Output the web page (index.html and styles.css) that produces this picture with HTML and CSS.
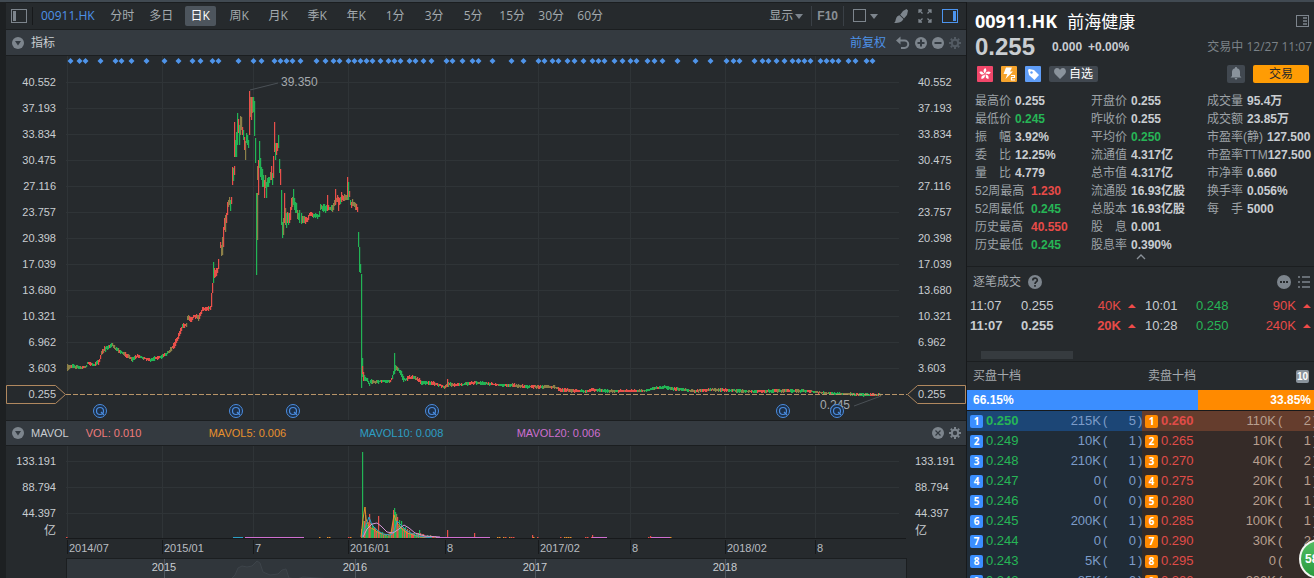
FILE: index.html
```
<!DOCTYPE html>
<html lang="zh-CN">
<head>
<meta charset="utf-8">
<title>00911.HK 前海健康</title>
<link rel="stylesheet" href="styles.css">
</head>
<body>
<div class="app">
  <main class="main">
    <nav class="toolbar">
      <button class="icon-btn side-toggle" aria-label="侧栏"><svg width="16" height="14" viewBox="0 0 16 14"><rect x=".5" y=".5" width="15" height="13" fill="none" stroke="#7d858d"/><rect x="2" y="2" width="3" height="10" fill="#7d858d"/></svg></button>
      <span class="sep"></span>
      <button class="symbol">00911.HK</button>
      <div class="periods">
        <button>分时</button><button>多日</button><button class="active">日K</button><button>周K</button><button>月K</button><button>季K</button><button>年K</button><button>1分</button><button>3分</button><button>5分</button><button>15分</button><button>30分</button><button>60分</button>
      </div>
      <div class="tools">
        <button class="display">显示<svg width="8" height="5" viewBox="0 0 8 5"><path d="M0 0h8L4 5z" fill="#7d858d"/></svg></button>
        <button class="f10">F10</button>
        <button class="shape" aria-label="形状"><svg width="26" height="14" viewBox="0 0 26 14"><rect x=".5" y=".5" width="12" height="12" fill="none" stroke="#7d858d"/><path d="M17 5h8l-4 5z" fill="#7d858d"/></svg></button>
        <button class="icon-btn" aria-label="画笔"><svg width="14" height="14" viewBox="0 0 14 14" fill="#7d858d"><path d="M9 2l3.500-2L14 1.500 13 6l-3 3.500L6.200 5.700z"/><path d="M5.500 6.300L9.400 10C8 12.800 6 13.800 0 14c1.500-1 1.300-2 1.800-3.800.6-2.200 1.800-3.400 3.700-3.900z"/></svg></button>
        <button class="icon-btn" aria-label="全屏"><svg width="14" height="14" viewBox="0 0 14 14" fill="none" stroke="#7d858d"><path d="M1 4V1h3M1 1l3.500 3.500M10 1h3v3M13 1L9.500 4.500M1 10v3h3M1 13l3.500-3.500M10 13h3v-3M13 13L9.500 9.500" stroke-width="1.300"/></svg></button>
        <button class="icon-btn" aria-label="报价面板"><svg width="16" height="14" viewBox="0 0 16 14"><rect x=".5" y=".5" width="15" height="13" fill="none" stroke="#4c94ee"/><rect x="11" y="2" width="3" height="10" fill="#4c94ee"/></svg></button>
      </div>
    </nav>

    <header class="bar">
      <svg class="disc" width="12" height="12" viewBox="0 0 12 12"><circle cx="6" cy="6" r="6" fill="#7d858d"/><path d="M3 4h6L6 8.500z" fill="#333a41"/></svg>
      <h2 class="bar-title">指标</h2>
      <div class="bar-actions">
        <button class="adjust">前复权</button>
        <button class="icon-btn" aria-label="撤销"><svg width="14" height="14" viewBox="0 0 14 14"><path d="M2 4.500h6.500a3.500 3.500 0 0 1 0 7.500H5" fill="none" stroke="#7d858d" stroke-width="2"/><path d="M0 4.500L4.500.5v8z" fill="#7d858d"/></svg></button>
        <button class="icon-btn" aria-label="放大"><svg width="12" height="12" viewBox="0 0 12 12"><circle cx="6" cy="6" r="6" fill="#7d858d"/><path d="M6 2.500v7M2.500 6h7" stroke="#333a41" stroke-width="2"/></svg></button>
        <button class="icon-btn" aria-label="缩小"><svg width="12" height="12" viewBox="0 0 12 12"><circle cx="6" cy="6" r="6" fill="#7d858d"/><path d="M2.500 6h7" stroke="#333a41" stroke-width="2"/></svg></button>
        <button class="icon-btn" aria-label="设置"><svg width="12" height="12" viewBox="0 0 12 12" fill="none" stroke="#535b63"><circle cx="6" cy="6" r="3.200" stroke-width="2"/><path d="M6 0v2M6 10v2M0 6h2M10 6h2M1.800 1.800l1.400 1.400M8.800 8.800l1.400 1.400M1.800 10.200l1.400-1.400M8.800 3.200l1.400-1.400" stroke-width="2"/></svg></button>
      </div>
    </header>

    <section class="chart-row price-row">
      <ul class="axis left">
        <li>40.552</li><li>37.193</li><li>33.834</li><li>30.475</li><li>27.116</li><li>23.757</li><li>20.398</li><li>17.039</li><li>13.680</li><li>10.321</li><li>6.962</li><li>3.603</li>
        <li class="tag"><svg width="60" height="19" viewBox="0 0 60 19"><path d="M.5.5h49l10 9-10 9H.5z" fill="#262a2d" stroke="#b0885f"/></svg><span>0.255</span></li>
      </ul>
      <div class="plot" id="price-plot"></div>
      <ul class="axis right">
        <li>40.552</li><li>37.193</li><li>33.834</li><li>30.475</li><li>27.116</li><li>23.757</li><li>20.398</li><li>17.039</li><li>13.680</li><li>10.321</li><li>6.962</li><li>3.603</li>
        <li class="tag"><svg width="59" height="19" viewBox="0 0 59 19"><path d="M58.500.5h-48l-10 9 10 9h48z" fill="#262a2d" stroke="#b0885f"/></svg><span>0.255</span></li>
      </ul>
    </section>

    <header class="bar vol-bar">
      <svg class="disc" width="12" height="12" viewBox="0 0 12 12"><circle cx="6" cy="6" r="6" fill="#7d858d"/><path d="M3 4h6L6 8.500z" fill="#333a41"/></svg>
      <h2 class="bar-title small">MAVOL</h2>
      <span class="ma vol">VOL: 0.010</span>
      <span class="ma ma5">MAVOL5: 0.006</span>
      <span class="ma ma10">MAVOL10: 0.008</span>
      <span class="ma ma20">MAVOL20: 0.006</span>
      <div class="bar-actions">
        <button class="icon-btn" aria-label="关闭"><svg width="12" height="12" viewBox="0 0 12 12"><circle cx="6" cy="6" r="6" fill="#7d858d"/><path d="M3.500 3.500l5 5M8.500 3.500l-5 5" stroke="#333a41" stroke-width="1.200"/></svg></button>
        <button class="icon-btn" aria-label="设置"><svg width="12" height="12" viewBox="0 0 12 12" fill="none" stroke="#7d858d"><circle cx="6" cy="6" r="3.200" stroke-width="2"/><path d="M6 0v2M6 10v2M0 6h2M10 6h2M1.800 1.800l1.400 1.400M8.800 8.800l1.400 1.400M1.800 10.200l1.400-1.400M8.800 3.200l1.400-1.400" stroke-width="2"/></svg></button>
      </div>
    </header>

    <section class="chart-row vol-row">
      <ul class="axis left vol-axis"><li>133.191</li><li>88.794</li><li>44.397</li><li class="unit">亿</li></ul>
      <div class="plot" id="vol-plot"></div>
      <ul class="axis right vol-axis"><li>133.191</li><li>88.794</li><li>44.397</li><li class="unit">亿</li></ul>
    </section>
    <section class="chart-row date-row"><div class="plot" id="date-axis"></div></section>
    <section class="chart-row nav-row"><div class="plot navigator" id="navigator"></div></section>
  </main>

  <aside class="panel">
    <div class="title-row">
      <h1>00911.HK</h1><span class="name">前海健康</span>
      <button class="icon-btn push" aria-label="布局"><svg width="13" height="12" viewBox="0 0 13 12"><rect x=".5" y=".5" width="12" height="11" fill="none" stroke="#7d858d"/><path d="M7 3h4M7 6h4M7 9h4" stroke="#7d858d" stroke-width="1.500"/></svg></button>
    </div>
    <div class="price-line">
      <strong class="last">0.255</strong><span class="change">0.000</span><span class="change pct">+0.00%</span>
      <time class="status">交易中 12/27 11:07</time>
    </div>
    <div class="badges">
      <svg width="16" height="16" viewBox="0 0 16 16"><rect width="16" height="16" rx="1" fill="#f2476a"/><g fill="#fff"><path id="petal" d="M8 7.500C6 6 6 3.500 8.200 2c1.300 1.500 1.500 2.800.4 3.700z"/><use href="#petal" transform="rotate(72 8 8)"/><use href="#petal" transform="rotate(144 8 8)"/><use href="#petal" transform="rotate(216 8 8)"/><use href="#petal" transform="rotate(288 8 8)"/></g></svg>
      <svg width="16" height="16" viewBox="0 0 16 16"><rect width="16" height="16" rx="1" fill="#f5a32c"/><path d="M5 1.500h6L9 5.500h3L4.500 13l1.800-5H2.500z" fill="#fff"/><path d="M10 9.500h3.500v2H10.500v2.500h3.500" fill="none" stroke="#fff" stroke-width="1.200"/></svg>
      <svg width="16" height="16" viewBox="0 0 16 16"><rect width="16" height="16" rx="1" fill="#5f9df7"/><path d="M3 4l1-1 5 1 5 5-4.500 5L4 9z" fill="#fff"/><circle cx="6.500" cy="6.500" r="1.200" fill="#5f9df7"/></svg>
      <button class="fav"><svg width="12" height="11" viewBox="0 0 12 11"><path d="M6 11L1 6C-1 3.500.5 0 3 0c1.500 0 2.500.8 3 2 .5-1.200 1.500-2 3-2 2.500 0 4 3.500 2 6z" fill="#8a939c"/></svg>自选</button>
      <button class="bell" aria-label="提醒"><svg width="12" height="13" viewBox="0 0 12 13"><path d="M6 0c.8 0 1 .5 1 1.200C9 1.700 10 3 10 5v4l1.500 1.500H.5L2 9V5c0-2 1-3.300 3-3.800C5 .5 5.200 0 6 0zM4.500 11h3L6 13z" fill="#8a939c"/></svg></button>
      <button class="trade">交易</button>
    </div>

    <div class="stats">
      <dl>
        <div><dt>最高价</dt><dd>0.255</dd></div>
        <div><dt>最低价</dt><dd class="dn">0.245</dd></div>
        <div><dt>振　幅</dt><dd>3.92%</dd></div>
        <div><dt>委　比</dt><dd>12.25%</dd></div>
        <div><dt>量　比</dt><dd>4.779</dd></div>
        <div><dt class="wide">52周最高</dt><dd class="up">1.230</dd></div>
        <div><dt class="wide">52周最低</dt><dd class="dn">0.245</dd></div>
        <div><dt class="wide">历史最高</dt><dd class="up">40.550</dd></div>
        <div><dt class="wide">历史最低</dt><dd class="dn">0.245</dd></div>
      </dl>
      <dl>
        <div><dt>开盘价</dt><dd>0.255</dd></div>
        <div><dt>昨收价</dt><dd>0.255</dd></div>
        <div><dt>平均价</dt><dd class="dn">0.250</dd></div>
        <div><dt>流通值</dt><dd>4.317亿</dd></div>
        <div><dt>总市值</dt><dd>4.317亿</dd></div>
        <div><dt>流通股</dt><dd>16.93亿股</dd></div>
        <div><dt>总股本</dt><dd>16.93亿股</dd></div>
        <div><dt>股　息</dt><dd>0.001</dd></div>
        <div><dt>股息率</dt><dd>0.390%</dd></div>
      </dl>
      <dl>
        <div><dt>成交量</dt><dd>95.4万</dd></div>
        <div><dt>成交额</dt><dd>23.85万</dd></div>
        <div><dt>市盈率(静)</dt><dd>127.500</dd></div>
        <div><dt class="tight">市盈率TTM</dt><dd>127.500</dd></div>
        <div><dt>市净率</dt><dd>0.660</dd></div>
        <div><dt>换手率</dt><dd>0.056%</dd></div>
        <div><dt>每　手</dt><dd>5000</dd></div>
      </dl>
    </div>
    <button class="collapse" aria-label="收起"><svg width="10" height="6" viewBox="0 0 10 6"><path d="M1 5l4-4 4 4" fill="none" stroke="#8a9199" stroke-width="1.300"/></svg></button>

    <section class="ticks">
      <header class="sub-head">
        <h2>逐笔成交</h2>
        <svg width="14" height="14" viewBox="0 0 14 14"><circle cx="7" cy="7" r="7" fill="#7d858d"/><path d="M4.800 5.500c0-3 4.500-3 4.500-.3C9.300 7 7 6.800 7 9M7 10v1.700" fill="none" stroke="#262a2d" stroke-width="1.700"/></svg>
        <button class="icon-btn push" aria-label="更多"><svg width="14" height="14" viewBox="0 0 14 14"><circle cx="7" cy="7" r="7" fill="#7d858d"/><path d="M3 7h2M6 7h2M9 7h2" stroke="#262a2d" stroke-width="2"/></svg></button>
        <button class="icon-btn list" aria-label="列表"><svg width="12" height="12" viewBox="0 0 12 12"><path d="M0 1h2M4 1h8M0 6h2M4 6h8M0 11h2M4 11h8" stroke="#7d858d" stroke-width="1.500"/></svg></button>
      </header>
      <div class="pair">
        <table>
          <tr><td class="t">11:07</td><td class="p">0.255</td><td class="q up">40K</td><td class="a"><i class="tri"></i></td></tr>
          <tr class="bold"><td class="t">11:07</td><td class="p">0.255</td><td class="q up">20K</td><td class="a"><i class="tri"></i></td></tr>
        </table>
        <table>
          <tr><td class="t">10:01</td><td class="p dn">0.248</td><td class="q up">90K</td><td class="a"><i class="tri"></i></td></tr>
          <tr><td class="t">10:28</td><td class="p dn">0.250</td><td class="q up">240K</td><td class="a"><i class="tri"></i></td></tr>
        </table>
      </div>
      <div class="thumb"></div>
    </section>

    <section class="book">
      <header class="sub-head book-head"><h2>买盘十档</h2><h2>卖盘十档</h2><button class="depth push">10</button></header>
      <div class="ratio"><span class="bid">66.15%</span><span class="ask">33.85%</span></div>
      <div class="pair depth-rows">
        <table class="buy">
          <tr><td class="n"><b>1</b></td><td class="px">0.250</td><td class="qty">215K</td><td class="par">(</td><td class="cnt">5</td><td class="par">)</td></tr>
          <tr><td class="n"><b>2</b></td><td class="px">0.249</td><td class="qty">10K</td><td class="par">(</td><td class="cnt">1</td><td class="par">)</td></tr>
          <tr><td class="n"><b>3</b></td><td class="px">0.248</td><td class="qty">210K</td><td class="par">(</td><td class="cnt">1</td><td class="par">)</td></tr>
          <tr><td class="n"><b>4</b></td><td class="px">0.247</td><td class="qty">0</td><td class="par">(</td><td class="cnt">0</td><td class="par">)</td></tr>
          <tr><td class="n"><b>5</b></td><td class="px">0.246</td><td class="qty">0</td><td class="par">(</td><td class="cnt">0</td><td class="par">)</td></tr>
          <tr><td class="n"><b>6</b></td><td class="px">0.245</td><td class="qty">200K</td><td class="par">(</td><td class="cnt">1</td><td class="par">)</td></tr>
          <tr><td class="n"><b>7</b></td><td class="px">0.244</td><td class="qty">0</td><td class="par">(</td><td class="cnt">0</td><td class="par">)</td></tr>
          <tr><td class="n"><b>8</b></td><td class="px">0.243</td><td class="qty">5K</td><td class="par">(</td><td class="cnt">1</td><td class="par">)</td></tr>
          <tr><td class="n"><b>9</b></td><td class="px">0.242</td><td class="qty">85K</td><td class="par">(</td><td class="cnt">6</td><td class="par">)</td></tr>
        </table>
        <table class="sell">
          <tr><td class="n"><b>1</b></td><td class="px">0.260</td><td class="qty">110K</td><td class="par">(</td><td class="cnt">2</td><td class="par">)</td></tr>
          <tr><td class="n"><b>2</b></td><td class="px">0.265</td><td class="qty">10K</td><td class="par">(</td><td class="cnt">1</td><td class="par">)</td></tr>
          <tr><td class="n"><b>3</b></td><td class="px">0.270</td><td class="qty">40K</td><td class="par">(</td><td class="cnt">2</td><td class="par">)</td></tr>
          <tr><td class="n"><b>4</b></td><td class="px">0.275</td><td class="qty">20K</td><td class="par">(</td><td class="cnt">1</td><td class="par">)</td></tr>
          <tr><td class="n"><b>5</b></td><td class="px">0.280</td><td class="qty">20K</td><td class="par">(</td><td class="cnt">1</td><td class="par">)</td></tr>
          <tr><td class="n"><b>6</b></td><td class="px">0.285</td><td class="qty">100K</td><td class="par">(</td><td class="cnt">1</td><td class="par">)</td></tr>
          <tr><td class="n"><b>7</b></td><td class="px">0.290</td><td class="qty">30K</td><td class="par">(</td><td class="cnt">2</td><td class="par">)</td></tr>
          <tr><td class="n"><b>8</b></td><td class="px">0.295</td><td class="qty">0</td><td class="par">(</td><td class="cnt"></td><td class="par"></td></tr>
          <tr><td class="n"><b>9</b></td><td class="px">0.300</td><td class="qty">200K</td><td class="par">(</td><td class="cnt"></td><td class="par"></td></tr>
        </table>
      </div>
    </section>
  </aside>
  <div class="bubble">58</div>
</div>
<script src="chart.js"></script>
</body>
</html>
```
FILE: styles.css
```
* { box-sizing: border-box; }
body {
  margin: 0;
  background: #1d2022;
  color: #c9cdd1;
  font: 12px/18px "Liberation Sans", "Noto Sans CJK SC", sans-serif;
}
h1, h2, ul, dl, dd { margin: 0; padding: 0; font-size: inherit; font-weight: normal; }
ul { list-style: none; }
button { background: none; border: 0; padding: 0; color: inherit; font: inherit; cursor: pointer; }
svg { display: block; }
.up { color: #e84b48; }
.dn { color: #26b556; }
.push { margin-left: auto; }
.icon-btn { display: flex; align-items: center; }

.app {
  position: relative;
  display: grid;
  grid-template-columns: minmax(0, 1fr) 348px;
  height: 100vh;
  overflow: hidden;
  border-top: 2px solid #414a52;
}
.main { display: flex; flex-direction: column; min-width: 0; margin-left: 6px; background: #262a2d; }

.toolbar {
  display: flex;
  align-items: center;
  height: 28px;
  padding: 0 8px 0 5px;
  border-top: 1px solid #1b1e20;
  border-bottom: 1px solid #1b1e20;
  color: #a4aaaf;
  font-family: "Open Sans", "Noto Sans CJK SC", sans-serif;
}
.sep { width: 1px; height: 18px; margin: 0 8px 0 5px; background: #17191b; }
.symbol { color: #4d92e8; }
.periods { display: flex; margin-left: 12px; gap: 8px; }
.periods button { width: 31px; height: 20px; border-radius: 2px; white-space: nowrap; }
.periods .active { background: #4d555d; color: #fff; }
.tools { display: flex; align-items: center; margin-left: auto; gap: 10px; }
.display { display: flex; align-items: center; gap: 2px; margin-right: -2px; }
.f10 { height: 20px; padding: 0 5px; margin-right: -1px; border: solid #3a4046; border-width: 0 1px; color: #8a9096; font: bold 12px/20px "Liberation Sans", sans-serif; }
.shape { margin-right: 5px; }

.bar {
  display: flex;
  align-items: center;
  height: 26px;
  padding: 0 5px 0 6px;
  background: #343a40;
  border-bottom: 1px solid #1b1e20;
}
.bar-title { margin-left: 7px; }
.small, .ma { font-size: 11px; }
.bar-actions { display: flex; align-items: center; gap: 5px; margin-left: auto; }
.adjust { margin-right: 5px; color: #4d92e8; }
.vol-bar { border-top: 1px solid #1b1e20; }
.ma { width: 157px; white-space: nowrap; }
.ma5 { color: #e8912d; width: 151px; }
.ma10 { color: #2d9fc4; }
.ma20 { color: #cf6fd0; }
.vol { color: #ef7c7c; width: 123px; margin-left: 17px; }

.chart-row { display: grid; grid-template-columns: 60px minmax(0, 1fr) 59px; }
.plot { grid-column: 2; min-width: 0; overflow: hidden; }
.plot svg { width: 100%; height: 100%; }
.price-row { height: 364px; }
.vol-row { height: 93px; }
.date-row { height: 19px; }
.nav-row { flex: 1; min-height: 20px; }
.navigator { background: #30363b; border: solid #1b1e20; border-width: 1px 1px 0; }
.axis { padding-top: 13px; font-size: 11px; line-height: 26px; }
.axis.left { text-align: right; padding-right: 10px; }
.axis.right { padding-left: 11px; }
.axis.vol-axis { padding-top: 2px; }
.right.vol-axis { padding-left: 8px; }
.unit { font-size: 12px; line-height: 10px; }
.tag { position: relative; }
.tag svg { position: absolute; top: 4px; }
.left .tag svg { left: 0; }
.right .tag svg { left: -11px; }
.tag span { position: relative; }

.panel { border-left: 1px solid #17191b; background: #262a2d; overflow: hidden; display: flex; flex-direction: column; }
.title-row { display: flex; align-items: center; height: 32px; padding: 6px 5px 0 8px; color: #fff; }
h1 { font: bold 18px/24px "Open Sans", sans-serif; }
.name { margin-left: 10px; font: 17px/24px "Noto Sans CJK SC", sans-serif; }
.price-line { display: flex; align-items: center; height: 26px; padding: 0 2px 0 8px; white-space: nowrap; }
.last { font-size: 24px; line-height: 24px; }
.change { margin-left: 17px; font-weight: bold; }
.pct { margin-left: 6px; }
.status { margin-left: auto; color: #7b8288; font-family: "Open Sans", "Noto Sans CJK SC", sans-serif; }
.badges { display: flex; align-items: center; gap: 8px; height: 27px; padding: 0 5px 0 10px; }
.fav { display: flex; align-items: center; gap: 3px; height: 16px; padding: 0 5px; background: #414850; border-radius: 2px; color: #fff; }
.bell { display: grid; place-items: center; width: 18px; height: 18px; margin-left: auto; background: #414850; border-radius: 2px; }
.trade { width: 56px; height: 18px; border-radius: 2px; background: #ff9c04; color: #2a2a2a; }

.stats { display: grid; grid-template-columns: 116px 116px 1fr; padding: 5px 0 0 8px; }
.stats dl > div { display: flex; height: 18px; white-space: nowrap; }
dt { min-width: 36px; margin-right: 4px; color: #9da2a7; }
dt.wide { min-width: 52px; }
dt.tight { margin-right: 0; }
dd { font-weight: bold; }
.collapse { align-self: center; height: 12px; display: flex; align-items: flex-start; }

.ticks { height: 95px; border-top: 1px solid #1b1e20; }
.sub-head { display: flex; align-items: center; height: 29px; padding-left: 6px; gap: 7px; color: #a4a9ae; }
.list { padding-right: 4px; }
.pair { display: grid; grid-template-columns: 175px 175px; }
table { border-collapse: collapse; table-layout: fixed; width: 175px; font-size: 13px; line-height: 20px; }
td { padding: 0; height: 20px; }
.t { width: 51px; padding-left: 3px; }
.p { width: 50px; padding-left: 3px; }
.q { width: 53px; text-align: right; }
.a { padding-left: 7px; }
.bold { font-weight: bold; }
.tri { display: block; width: 8px; border: solid transparent; border-width: 0 4px 4px; border-bottom-color: #f04a48; }
.thumb { width: 92px; height: 8px; margin: 15px 0 0 14px; background: #363b3f; }

.book { border-top: 1px solid #1b1e20; }
.book-head { height: 28px; gap: 0; padding-right: 5px; }
.book-head h2 { width: 175px; }
.book-head h2 + h2 { width: auto; }
.depth { width: 13px; height: 13px; border-radius: 2px; background: #8a939c; color: #fff; font: bold 10px/13px "Liberation Sans", sans-serif; }
.ratio { display: flex; height: 21px; border-bottom: 1px solid #17191b; font-weight: bold; line-height: 20px; color: #fff; }
.bid { flex: 2 1 0; padding-left: 6px; background: #3b8eff; }
.ask { flex: 1 1 0; padding-right: 3px; text-align: right; background: #ff8a00; }
.buy { background: #202c37; color: #7d9cc9; }
.sell { background: #352b28; color: #b89f8f; }
.buy tr:first-child { background: #1c4676; }
.sell tr:first-child { background: #653d2d; }
.n { width: 19px; padding-left: 3px; }
.n b { display: block; width: 13px; height: 13px; border-radius: 2px; background: #3b8eff; color: #fff; text-align: center; font: bold 10px/13px "Open Sans", sans-serif; }
.sell b { background: #ff8a00; }
.px { width: 50px; color: #26b556; }
.sell .px { color: #e04c48; }
tr:first-child .px { font-weight: bold; }
.qty { width: 65px; text-align: right; }
.par { width: 6px; padding-left: 2px; }
.cnt { width: 29px; text-align: right; }

.bubble {
  position: absolute;
  right: -25px;
  bottom: -1px;
  width: 40px;
  height: 40px;
  border: 2px solid #f2f5f2;
  border-radius: 50%;
  background: linear-gradient(#52bd63, #279a3d);
  color: #fff;
  font: bold 12px/36px "Liberation Sans", sans-serif;
  padding-left: 4px;
}
```
FILE: chart.js
```
(function () {
  var BASE = 841;
  var RED = '#e8504a', GREEN = '#22b455', OLIVE = '#8c8048', GRID = '#2f3437';
  var COLORS = { r: RED, g: GREEN, o: OLIVE };
  var seed = 7;
  function rnd() { seed = (seed * 16807) % 2147483647; return seed / 2147483647; }

  var grid = [1, 96, 187, 282, 379, 472, 564, 659, 749];
  var dates = ['2014/07', '2015/01', '7', '2016/01', '8', '2017/02', '8', '2018/02', '8'];
  var events = [4,13,19,34,49,55,65,80,98,112,126,134,146,152,172,187,195,208,214,220,226,234,250,259,267,273,282,288,294,300,306,314,322,328,334,343,349,357,365,380,386,396,406,412,426,445,457,472,478,486,492,501,508,517,526,532,538,548,556,564,570,581,588,596,611,629,644,660,667,673,688,696,702,710,718,726,732,738,744,754,760,766,772,782,789,800,806];
  var quarters = [34, 170, 227, 366, 717, 771];

  /* Ranges are stored in thirds of a unit: x, high, low */
  var early = [[20,850,875],[35,850,868],[60,858,868],[75,855,866],[80,845,855],[100,850,860],[110,840,858],[118,830,848],[122,808,830],[135,795,815],[155,785,800],[165,800,815],[185,812,825],[205,822,840],[215,832,845],[230,822,835],[250,828,840],[270,835,846],[290,826,840],[310,820,834],[325,808,820],[340,785,805],[350,765,785],[358,740,775],[365,730,745],[378,728,742],[380,703,720],[390,712,732],[400,700,715],[415,700,725],[425,680,695],[438,678,695],[451,675,688]];
  var middle = [[725,402,432],[742,410,432],[745,394,412],[765,398,415],[775,398,418],[779,368,395],[790,372,400],[800,372,395],[815,376,396],[826,345,375],[835,345,375],[850,343,366],[860,340,362],[866,330,355],[870,360,388],[880,356,382],[890,380,400]];
  var late = [[67,65,115],[72,100,130],[80,108,128],[88,125,138],[92,112,130],[100,120,132],[115,120,130],[130,120,127],[150,120,128],[155,112,124],[160,90,110],[166,72,95],[175,80,95],[182,90,110],[188,105,124],[196,115,125],[205,105,120],[225,108,118],[238,115,130],[245,124,138],[270,122,135],[300,130,142],[312,135,147],[325,126,140],[345,130,140],[370,128,138],[405,122,134],[440,126,136],[480,130,140],[520,130,143],[560,135,145],[600,134,146],[645,136,146],[660,145,158],[680,145,157],[740,150,158],[755,142,154],[800,148,158],[920,148,156],[935,140,150],[980,136,148],[1000,140,152],[1060,148,158],[1120,144,154],[1200,148,158],[1250,150,160],[1310,146,158],[1390,148,158],[1430,152,160],[1470,156,165],[1520,158,166],[1570,158,170],[1625,160,167]];
  var spikes = [[454,640,680,'r'],[457,610,640,'r'],[460,546,610,'g'],[463,565,595,'r'],[466,570,590,'r'],[469,565,588,'r'],[472,564,580,'r'],[475,537,567,'r'],[479,485,505,'r'],[482,495,527,'o'],[485,470,525,'o'],[488,440,500,'r'],[491,415,450,'r'],[494,405,455,'o'],[497,400,430,'r'],[500,365,405,'r'],[503,360,380,'o'],[506,350,375,'o'],[509,360,392,'g'],[512,350,372,'r'],[515,262,315,'r'],[518,265,303,'g'],[521,258,285,'r'],[523,127,230,'r'],[526,180,230,'g'],[529,155,230,'g'],[532,99,195,'g'],[535,118,160,'r'],[538,135,195,'g'],[541,108,165,'o'],[544,110,150,'o'],[547,140,165,'r'],[550,150,180,'g'],[553,170,210,'r'],[556,182,240,'o'],[559,158,190,'g'],[562,165,195,'g'],[565,180,204,'g'],[568,32,165,'r'],[571,50,110,'o'],[574,52,120,'r'],[577,52,100,'o'],[580,50,95,'g'],[583,63,168,'g'],[586,175,250,'g'],[589,340,585,'g'],[591,340,480,'o'],[592,258,300,'o'],[595,240,345,'r'],[598,183,265,'g'],[601,235,290,'g'],[604,262,300,'g'],[607,268,320,'g'],[610,285,320,'g'],[613,300,353,'r'],[616,285,325,'o'],[619,305,353,'g'],[622,295,320,'g'],[625,290,320,'g'],[628,290,310,'g'],[631,275,300,'o'],[634,258,300,'r'],[637,280,314,'g'],[640,228,295,'r'],[643,127,215,'r'],[646,190,240,'g'],[649,190,225,'r'],[652,190,212,'r'],[655,165,205,'g'],[658,237,280,'g'],[661,268,315,'r'],[664,330,435,'g'],[667,425,473,'g'],[670,415,465,'o'],[673,340,430,'r'],[676,385,435,'o'],[679,400,445,'g'],[682,395,430,'r'],[685,400,435,'g'],[688,400,430,'r'],[691,380,420,'r'],[694,355,390,'r'],[697,350,380,'o'],[700,327,375,'g'],[703,355,390,'g'],[706,365,400,'g'],[709,370,400,'g'],[712,390,418,'o'],[715,400,420,'g'],[718,390,430,'g'],[722,400,432,'g'],[802,345,385,'r'],[824,327,375,'r'],[835,365,392,'r'],[842,335,365,'r'],[862,290,350,'r'],[865,305,360,'g'],[895,455,500,'g'],[898,500,577,'g'],[901,552,580,'g'],[904,582,925,'g'],[907,835,890,'g']];
  var lateSpikes = [[163,40,92,'g'],[322,116,140,'r']];

  function rect(x, y, w, h, c) { return '<rect x="' + x + '" y="' + y + '" width="' + w + '" height="' + h + '" fill="' + c + '"/>'; }
  function bar(x, hi, lo, c) {
    var y = Math.round(hi);
    return rect(x, y, 1.2, Math.max(1, Math.round(lo) - y), c);
  }
  function band(points, dx, dy, bias) {
    var out = '', color = RED, k = 0, end = points[points.length - 1][0] / 3;
    for (var x = points[0][0] / 3; x <= end; x++) {
      while (k < points.length - 2 && points[k + 1][0] / 3 <= x) k++;
      var a = points[k], b = points[k + 1], t = (x * 3 - a[0]) / (b[0] - a[0]);
      var hi = (a[1] + (b[1] - a[1]) * t) / 3, lo = (a[2] + (b[2] - a[2]) * t) / 3, span = lo - hi;
      if (rnd() < 0.6) {
        var r = rnd();
        color = r < (b[1] < a[1] ? bias + 0.12 : bias) ? RED : r < 0.75 ? GREEN : OLIVE;
      }
      out += bar(Math.round(x + dx), hi + dy + rnd() * span * 0.36 - 0.2, lo + dy - rnd() * span * 0.36 + 0.2, color);
    }
    return out;
  }
  function single(list, dx, dy) {
    return list.map(function (s) { return bar(Math.round(s[0] / 3 + dx), s[1] / 3 + dy, s[2] / 3 + dy, COLORS[s[3]]); }).join('');
  }
  function line(x1, y1, x2, y2, c, extra) {
    return '<line x1="' + x1 + '" y1="' + y1 + '" x2="' + x2 + '" y2="' + y2 + '" stroke="' + c + '" ' + (extra || '') + '/>';
  }
  function text(x, y, s, size, c, anchor) {
    return '<text x="' + x + '" y="' + y + '" font-size="' + size + '" fill="' + c + '" text-anchor="' + (anchor || 'start') + '">' + s + '</text>';
  }
  function verticals(k, h) {
    return grid.map(function (x) { return line(Math.round(x * k) + 0.5, 0, Math.round(x * k) + 0.5, h, GRID); }).join('');
  }
  function put(id, body) { document.getElementById(id).innerHTML = '<svg>' + body + '</svg>'; }
  function scaled(k, body) { return '<g transform="scale(' + k + ',1)">' + body + '</g>'; }

  function drawPrice(k, w) {
    var s = verticals(k, 364), i;
    for (i = 0; i < 12; i++) s += line(0, 26.5 + i * 26, w - 8, 26.5 + i * 26, GRID);
    events.forEach(function (x) { s += '<path d="M' + (x * k + 0.5) + ' 2l3 3-3 3-3-3z" fill="#4f94ea"/>'; });
    s += scaled(k, band(early, -6, 24, 0.42) + band(middle, -6, 24, 0.42) + single(spikes, -6, 24) + band(late, 274, 284, 0.28) + single(lateSpikes, 274, 284));
    s += line(0, 338.5, w, 338.5, '#b89468', 'stroke-dasharray="5 2"');
    s += line(184 * k, 34, 212 * k, 27, '#4b5156') + text(215 * k, 30, '39.350', 12, '#a4a9ae');
    s += line(788 * k, 350, 815 * k, 340, '#4b5156') + text(754 * k, 353, '0.245', 12, '#a4a9ae');
    quarters.forEach(function (x) {
      var c = x * k;
      s += '<circle cx="' + c + '" cy="355" r="6.500" fill="#1d3048" stroke="#4b8de0"/>' +
        '<circle cx="' + c + '" cy="355" r="3.500" fill="none" stroke="#4b8de0" stroke-width="1.200"/>' + line(c + 1, 356, c + 4, 359, '#4b8de0', 'stroke-width="1.200"');
    });
    put('price-plot', s);
  }

  function drawVolume(k, w) {
    var s = verticals(k, 92), b = '', x, h, i = 0;
    [15, 41, 67].forEach(function (y) { s += line(0, y + 0.5, w - 8, y + 0.5, GRID); });
    var heights = [[295,12],[297,26],[299,26],[302,18],[307,13],[312,9],[318,5],[322,3],[325,8],[327,20],[329,24],[332,20],[335,13],[341,10],[346,5],[353,5],[361,3],[373,1]];
    for (x = 295; x < 372; x++) {
      while (heights[i + 1][0] <= x) i++;
      var p = heights[i], q = heights[i + 1];
      h = p[1] + (q[1] - p[1]) * (x - p[0]) / (q[0] - p[0]);
      h = Math.max(1, Math.round(h * (0.6 + rnd() * 0.5)));
      b += rect(x, 92 - h, 1.2, h, rnd() < 0.4 ? RED : rnd() < 0.65 ? GREEN : OLIVE);
    }
    [[296,86,GREEN],[303,24,RED],[312,22,RED],[327,28,RED],[328,30,GREEN],[335,17,GREEN],[353,8,GREEN],[381,8,RED],[408,5,RED],[466,3,RED],[526,3,RED],[584,2,RED]].forEach(function (v) { b += rect(v[0], 92 - v[1], 1.2, v[1], v[2]); });
    [[282,286],[390,420],[431,448],[467,473],[492,505],[519,538],[580,606],[253,264],[0,3]].forEach(function (r) {
      for (x = r[0]; x < r[1]; x += 2) if (rnd() < 0.65) b += rect(x, 91, 1.5, 1, rnd() < 0.5 ? RED : '#e8912d');
    });
    b += rect(167, 91, 10, 1, '#2d9fc4') + rect(179, 91, 59, 1, '#cf6fd0') + rect(370, 91, 54, 1, '#cf6fd0') + rect(526, 91, 15, 1, '#cf6fd0') + rect(585, 91, 19, 1, '#cf6fd0');
    b += '<g fill="none"><path d="M295 91l2-18 2-12 1 12 3 8 4 2 6 4 8 2 4-2 3-18 3 8 4 5 6 5 10 3 10 2 10 2" stroke="#e8912d"/><path d="M296 91l4-12 3-8 3 8 5 5 6 4 8 1 3-4 3-10 4 4 6 6 10 5 15 2" stroke="#2d9fc4"/><path d="M297 91l4-8 5-5 5-1 4 3 6 6 6 1 6-4 5-4 5 3 6 5 10 3 15 1" stroke="#d595d6"/></g>';
    put('vol-plot', s + scaled(k, b) + line(0, 92.5, w - 1, 92.5, '#17191b'));
  }

  function draw() {
    var w = document.getElementById('price-plot').clientWidth, k = w / BASE, s = '';
    seed = 7;
    drawPrice(k, w);
    drawVolume(k, w);
    grid.forEach(function (x, i) {
      s += line(Math.round(x * k) + 0.5, 1, Math.round(x * k) + 0.5, 15, '#17191b') + text(x * k + 2, 13, dates[i], 11, '#b9bdc1');
    });
    put('date-axis', s);
    s = scaled(k, '<path d="M164 20l4-4 3-7 4-2 5 1 5-1 5-5 3 2 3 9 7 3 8-1 4-4 4-1 3 9 8 1 6-2 30 2z" fill="#353b40" stroke="#3d444a"/>');
    [[97, '2015'], [288, '2016'], [468, '2017'], [658, '2018']].forEach(function (y) {
      s += line(Math.round(y[0] * k) + 0.5, 0, Math.round(y[0] * k) + 0.5, 20, '#50575e') + text(y[0] * k, 12, y[1], 11, '#c9cdd1', 'middle');
    });
    put('navigator', s);
  }
  draw();
  window.addEventListener('resize', draw);
})();
```
